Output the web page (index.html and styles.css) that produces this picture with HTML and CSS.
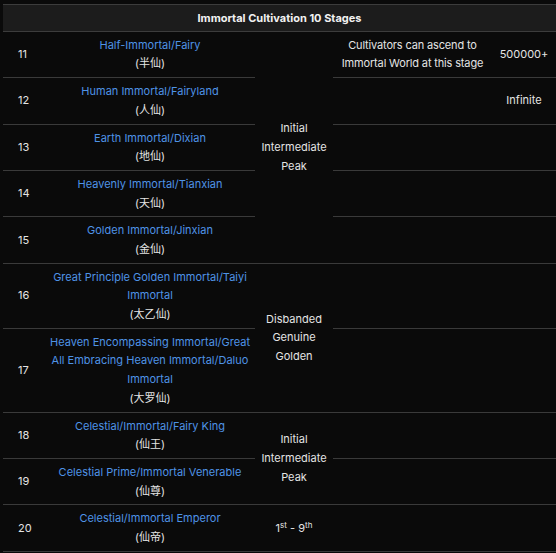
FILE: index.html
```html
<!DOCTYPE html>
<html>
<head>
<meta charset="utf-8">
<link rel="stylesheet" href="styles.css">
</head>
<body>
<table class="stages">
  <colgroup>
    <col class="c-num"><col class="c-name"><col class="c-stage"><col class="c-desc"><col class="c-val">
  </colgroup>
  <thead>
    <tr><th colspan="5">Immortal Cultivation 10 Stages</th></tr>
  </thead>
  <tbody>
    <tr>
      <td class="num">11</td>
      <td class="name"><a>Half-Immortal/Fairy</a><span class="cn">(半仙)</span></td>
      <td class="stage" rowspan="5">Initial<br>Intermediate<br>Peak</td>
      <td class="desc">Cultivators can ascend to Immortal World at this stage</td>
      <td class="val">500000+</td>
    </tr>
    <tr>
      <td class="num">12</td>
      <td class="name"><a>Human Immortal/Fairyland</a><span class="cn">(人仙)</span></td>
      <td class="desc"></td>
      <td class="val">Infinite</td>
    </tr>
    <tr>
      <td class="num">13</td>
      <td class="name"><a>Earth Immortal/Dixian</a><span class="cn">(地仙)</span></td>
      <td class="desc"></td>
      <td class="val"></td>
    </tr>
    <tr>
      <td class="num">14</td>
      <td class="name"><a>Heavenly Immortal/Tianxian</a><span class="cn">(天仙)</span></td>
      <td class="desc"></td>
      <td class="val"></td>
    </tr>
    <tr>
      <td class="num">15</td>
      <td class="name"><a>Golden Immortal/Jinxian</a><span class="cn">(金仙)</span></td>
      <td class="desc"></td>
      <td class="val"></td>
    </tr>
    <tr>
      <td class="num">16</td>
      <td class="name"><a>Great Principle Golden Immortal/Taiyi Immortal</a><span class="cn">(太乙仙)</span></td>
      <td class="stage" rowspan="2">Disbanded<br>Genuine<br>Golden</td>
      <td class="desc"></td>
      <td class="val"></td>
    </tr>
    <tr>
      <td class="num">17</td>
      <td class="name"><a>Heaven Encompassing Immortal/Great All Embracing Heaven Immortal/Daluo Immortal</a><span class="cn">(大罗仙)</span></td>
      <td class="desc"></td>
      <td class="val"></td>
    </tr>
    <tr>
      <td class="num">18</td>
      <td class="name"><a>Celestial/Immortal/Fairy King</a><span class="cn">(仙王)</span></td>
      <td class="stage" rowspan="2">Initial<br>Intermediate<br>Peak</td>
      <td class="desc"></td>
      <td class="val"></td>
    </tr>
    <tr>
      <td class="num">19</td>
      <td class="name"><a>Celestial Prime/Immortal Venerable</a><span class="cn">(仙尊)</span></td>
      <td class="desc"></td>
      <td class="val"></td>
    </tr>
    <tr>
      <td class="num">20</td>
      <td class="name"><a>Celestial/Immortal Emperor</a><span class="cn">(仙帝)</span></td>
      <td class="stage">1<sup>st</sup> - 9<sup>th</sup></td>
      <td class="desc"></td>
      <td class="val"></td>
    </tr>
  </tbody>
</table>
</body>
</html>
```
FILE: styles.css
```css
html, body {
  margin: 0;
  padding: 0;
  background: #0a0a0a;
}
body {
  padding: 4px 0 0 3px;
  font-family: "Inter", "Noto Sans CJK SC", sans-serif;
  font-size: 11px;
  color: #e4e4e4;
}
.stages {
  border-collapse: collapse;
  table-layout: fixed;
  width: 553px;
  line-height: 18.7px;
}
.c-num { width: 42px; }
.c-name { width: 210px; }
.c-stage { width: 78px; }
.c-desc { width: 159px; }
.c-val { width: 64px; }
.stages th {
  background: #1c1c1c;
  color: #f2f2f2;
  font-weight: 700;
  padding: 4px 0 3px;
  border-top: 1px solid #3c3c3c;
  border-bottom: 1px solid #3c3c3c;
}
.stages td {
  padding: 4px 4px;
  border-bottom: 1px solid #3a3a3a;
  text-align: center;
  vertical-align: middle;
}
.stages td.num {
  text-align: left;
  padding-left: 15px;
}
.stages td.desc {
  padding: 4px 0;
  letter-spacing: -0.15px;
}
.stages a {
  color: #4f93e6;
  display: block;
}
.cn {
  display: block;
  height: 18.7px;
  overflow: hidden;
}
.stages sup {
  font-size: 8px;
  line-height: 0;
  vertical-align: 4px;
}
```
